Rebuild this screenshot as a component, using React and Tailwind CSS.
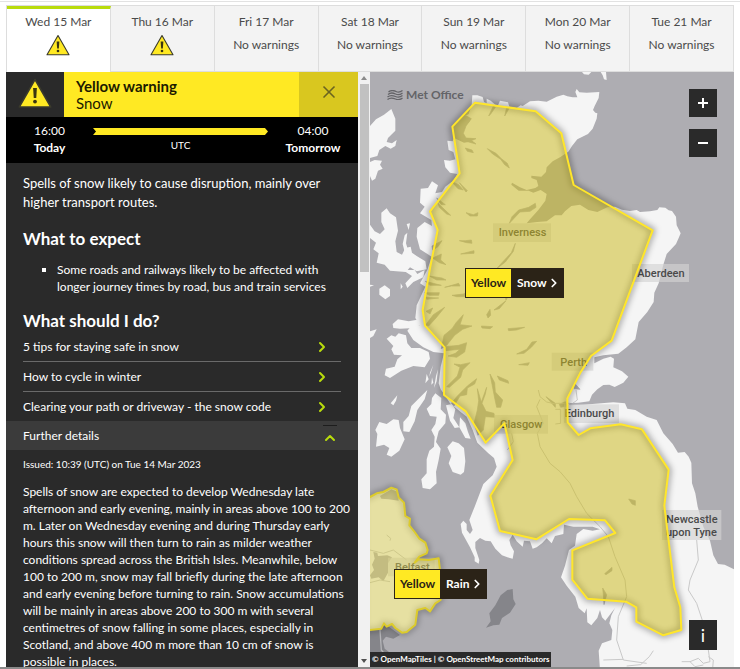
import { useState } from "react";
import { ChevronRight, ChevronUp, X } from "lucide-react";

const days = [
  { label: "Wed 15 Mar", warning: true },
  { label: "Thu 16 Mar", warning: true },
  { label: "Fri 17 Mar", warning: false },
  { label: "Sat 18 Mar", warning: false },
  { label: "Sun 19 Mar", warning: false },
  { label: "Mon 20 Mar", warning: false },
  { label: "Tue 21 Mar", warning: false },
];

const tips = [
  "5 tips for staying safe in snow",
  "How to cycle in winter",
  "Clearing your path or driveway - the snow code",
];

const placeLabels = [
  { lines: ["Inverness"], x: 369, y: 460, w: 174, h: 56, tx: 386 },
  { lines: ["Aberdeen"], x: 786, y: 582, w: 171, h: 54, tx: 802 },
  { lines: ["Perth"], x: 545, y: 848, w: 125, h: 54, tx: 571 },
  { lines: ["Edinburgh"], x: 582, y: 1003, w: 165, h: 56, tx: 584 },
  { lines: ["Glasgow"], x: 372, y: 1035, w: 162, h: 56, tx: 390 },
  { lines: ["Newcastle", "upon Tyne"], x: 876, y: 1320, w: 178, h: 90, tx: 888 },
  { lines: ["Belfast"], x: 54, y: 1463, w: 140, h: 56, tx: 75 },
];

const mainland =
  "M305 105 L307 76 L322 76 L338 81 L342 96 L350 100 L350 86 L362 92 L376 104 L384 106 L390 92 L414 97 L418 110 L440 114 L452 106 L458 108 L480 94 L505 92 L530 95 L560 80 L580 74 L592 79 L608 82 L622 82 L616 66 L620 57 L628 67 L650 68 L688 66 L686 84 L674 108 L669 120 L676 128 L682 130 L680 146 L668 176 L654 192 L622 208 L606 228 L595 245 L570 262 L548 274 L530 292 L528 306 L514 320 L484 317 L484 324 L500 330 L505 348 L496 354 L470 360 L450 352 L426 338 L424 344 L446 362 L476 362 L490 368 L512 360 L530 372 L526 392 L505 420 L480 448 L470 460 L502 456 L530 454 L555 436 L575 436 L585 424 L604 408 L630 404 L655 420 L682 426 L712 412 L735 410 L756 419 L780 423 L800 420 L810 426 L840 424 L862 420 L868 412 L886 413 L896 421 L906 423 L918 440 L920 466 L932 490 L926 504 L918 522 L890 552 L880 584 L866 640 L853 668 L851 696 L832 726 L806 756 L796 808 L770 832 L745 851 L700 856 L673 862 L673 880 L700 866 L722 860 L732 866 L730 892 L756 904 L775 920 L760 938 L734 951 L718 944 L700 945 L682 958 L666 974 L658 994 L625 998 L592 1000 L600 1006 L640 1004 L730 997 L765 1000 L772 1016 L796 1020 L830 1040 L860 1050 L880 1090 L908 1122 L924 1148 L944 1146 L956 1160 L964 1178 L966 1240 L976 1270 L983 1310 L1000 1370 L1020 1412 L1030 1456 L1044 1482 L1064 1484 L1092 1498 L1092 1800 L690 1800 L686 1742 L696 1720 L724 1710 L727 1680 L718 1660 L724 1636 L735 1614 L706 1652 L696 1642 L690 1620 L682 1644 L664 1666 L652 1657 L650 1615 L644 1630 L626 1614 L616 1580 L590 1547 L573 1522 L585 1487 L597 1440 L615 1427 L620 1392 L640 1377 L668 1382 L690 1378 L668 1370 L610 1370 L582 1364 L580 1392 L555 1398 L545 1420 L530 1405 L516 1420 L500 1432 L488 1436 L480 1414 L462 1412 L458 1430 L440 1414 L428 1394 L418 1410 L422 1426 L432 1444 L428 1466 L412 1462 L396 1456 L376 1436 L362 1414 L346 1412 L330 1404 L316 1416 L316 1434 L328 1470 L326 1481 L314 1474 L314 1462 L300 1432 L276 1388 L272 1362 L280 1352 L290 1362 L290 1380 L300 1392 L308 1380 L298 1350 L314 1310 L340 1242 L368 1216 L380 1190 L372 1164 L355 1150 L322 1118 L308 1080 L290 1040 L262 1018 L240 1000 L224 975 L212 958 L206 940 L212 890 L222 850 L190 846 L160 832 L130 810 L112 782 L124 768 L150 766 L136 744 L140 706 L166 650 L150 640 L172 600 L185 560 L150 538 L140 500 L142 474 L164 456 L186 468 L184 450 L150 430 L164 410 L150 398 L152 356 L174 354 L186 334 L204 346 L196 370 L216 366 L226 350 L252 330 L262 312 L240 308 L226 292 L222 270 L240 272 L256 268 L250 246 L236 240 L232 212 L248 214 L252 204 L282 218 L300 215 L316 220 L302 209 L316 206 L286 204 L276 186 L284 168 L298 156 L302 146 L286 138 L296 132 Z";

// Smaller land masses: Outer Hebrides, Skye, Mull, Islay, Jura, Kintyre, Arran
const islands = [
  "M0 168 L18 148 L42 134 L64 117 L76 146 L76 182 L54 204 L50 216 L66 220 L80 210 L76 228 L62 236 L46 228 L28 240 L22 258 L0 264 Z",
  "M0 276 L14 270 L36 272 L30 284 L38 296 L24 302 L16 326 L6 332 L0 318 Z",
  "M34 428 L50 415 L60 430 L78 442 L84 482 L76 514 L80 546 L96 554 L106 534 L122 530 L126 548 L140 558 L166 574 L170 598 L140 604 L120 592 L108 606 L60 602 L44 584 L20 578 L26 550 L10 538 L18 518 L0 504 L0 464 L14 484 L30 492 L44 478 L34 456 Z",
  "M104 496 L112 488 L108 520 L114 540 L104 546 L98 522 Z",
  "M110 462 L120 460 L116 480 Z",
  "M98 600 L134 600 L142 612 L164 600 L160 622 L130 636 L112 654 L106 640 L126 618 Z",
  "M28 656 L44 646 L60 658 L60 678 L46 688 L28 674 Z",
  "M92 640 L98 650 L92 658 Z",
  "M68 762 L84 748 L116 754 L150 748 L156 762 L134 774 L90 776 L70 774 Z",
  "M50 806 L64 796 L76 800 L86 790 L108 796 L112 820 L124 834 L150 834 L176 846 L180 866 L164 892 L130 888 L94 902 L60 924 L44 916 L48 896 L74 890 L82 868 L96 856 L72 854 L64 838 L70 828 Z",
  "M0 784 L20 778 L10 798 L0 804 Z",
  "M0 644 L12 646 L0 650 Z",
  "M62 1000 L82 976 L78 992 L70 1006 Z",
  "M172 960 L164 988 L142 1020 L134 1054 L118 1086 L100 1084 L100 1056 L116 1038 L124 1008 L148 984 Z",
  "M28 1056 L50 1062 L70 1048 L86 1050 L90 1074 L104 1108 L88 1142 L64 1160 L50 1154 L58 1134 L42 1124 L18 1130 L22 1092 L16 1080 Z",
  "M196 970 L214 984 L212 1018 L228 1034 L226 1060 L206 1084 L198 1116 L212 1136 L206 1170 L198 1206 L200 1240 L180 1258 L158 1254 L154 1228 L170 1210 L170 1168 L178 1142 L192 1130 L194 1100 L184 1080 L196 1062 L200 1040 L180 1038 L170 1016 L184 1002 L186 984 Z",
  "M246 1002 L256 1018 L250 1044 L268 1072 L254 1074 L240 1052 L228 1006 Z",
  "M270 1042 L286 1060 L294 1086 L302 1106 L286 1104 L268 1072 Z",
  "M232 1132 L248 1114 L266 1120 L282 1134 L286 1174 L282 1206 L272 1214 L248 1206 L236 1180 L244 1158 Z",
  "M190 884 L184 904 L178 920 L180 908 Z M170 912 L176 928 L166 940 Z M186 922 L190 938 L184 944 Z M204 898 L200 934 L192 954 L198 918 Z",
  "M636 6 L664 6 L656 14 L642 13 Z M692 6 L708 6 L710 30 L702 28 L698 16 Z",
];

const lochs = [
  "M352 236 L378 250 L394 266 L412 280 L418 294 L404 284 L392 268 L368 252 Z",
  "M286 234 L306 240 L310 248 L292 244 Z",
  "M370 108 L356 138 L362 132 L376 112 Z",
  "M410 112 L404 138 L418 114 Z",
  "M252 202 L250 170 L268 150 L290 138 L304 146 L288 168 L280 190 L288 204 L318 206 L304 212 L318 222 L296 216 Z",
  "M476 412 L496 400 L498 412 L480 424 L450 426 L418 460 L426 440 L446 420 Z",
  "M436 520 L424 548 L396 578 L380 596 L406 576 L430 544 Z",
  "M288 428 L310 434 L324 428 L322 438 L300 438 Z",
  "M244 334 L266 344 L280 360 L264 356 Z M268 338 L292 362 L288 366 Z",
  "M200 384 L226 404 L214 404 Z M204 400 L242 436 L230 432 L208 412 Z",
  "M268 512 L286 512 L304 510 L306 520 L290 518 Z M272 552 L312 542 L312 550 Z",
  "M186 528 L216 512 L204 530 L188 540 Z M188 564 L214 552 L212 570 L228 584 L208 578 Z",
  "M178 618 L216 624 L228 630 L200 630 Z M224 652 L266 640 L270 648 L244 648 Z",
  "M166 634 L214 646 L180 646 Z M164 668 L208 668 L206 676 L178 676 Z M168 682 L206 684 L170 688 Z",
  "M246 676 L280 672 L296 664 L290 680 L260 680 Z",
  "M166 766 L190 734 L224 712 L198 744 L176 768 Z M168 724 L188 714 L180 732 Z",
  "M360 718 L362 736 L354 744 L350 734 Z M452 622 L428 640 L406 680 L408 690 L424 664 Z",
  "M408 692 L390 706 L372 720 L388 716 Z",
  "M214 836 L222 796 L246 776 L258 758 L280 734 L270 764 L306 768 L278 778 L254 796 L230 826 Z",
  "M334 768 L368 770 L360 776 L336 774 Z M414 776 L464 772 L440 780 L416 782 Z",
  "M224 830 L266 826 L290 818 L284 846 L260 862 L234 858 L256 850 L270 838 L228 842 Z",
  "M440 852 L470 838 L486 816 L500 814 L484 832 L462 850 Z M446 884 L478 878 L474 886 Z",
  "M230 950 L262 918 L270 892 L252 882 L272 884 L300 878 L278 900 L272 922 L238 952 Z",
  "M382 918 L414 932 L416 940 L388 930 Z M360 912 L374 938 L376 966 L398 990 L392 1012 L380 1012 L374 984 Z",
  "M244 1000 L262 978 L292 948 L320 926 L314 942 L292 954 L290 974 L270 978 L252 1008 Z",
  "M322 956 L334 996 L350 952 L346 972 L336 1000 L348 1024 L372 1030 L374 1042 L346 1040 L340 1080 L324 1096 L312 1060 L322 1020 L326 992 Z",
  "M528 980 L556 1000 L556 1012 Z M614 940 L630 958 L612 956 Z M586 995 L568 1003 L572 1012 L592 1008 Z",
  "M776 1287 L796 1292 L796 1306 L786 1302 Z M704 1511 L726 1492 L726 1502 L708 1514 Z M698 1554 L710 1574 L702 1604 L700 1574 Z",
];

const roads = [
  "M505 960 L510 980 L530 996 L556 1002 M510 988 L500 1010 L520 1060 L502 1090 L510 1130 L540 1180 L570 1205 L600 1240 L620 1280 L650 1330 L690 1370 L715 1400 L735 1460 L765 1530 L770 1580 L745 1640 L740 1710 L760 1770 L830 1780 M425 1090 L430 1115 L412 1140",
  "M556 1000 L600 1000 M556 1018 L572 1018 L572 1060 L556 1062 M618 960 L622 990 L608 1000 M700 1770 L760 1768 M770 1788 L812 1784 L838 1760 L850 1742",
  "M980 1410 L985 1470 L960 1530 L955 1560 L980 1600 L1000 1660 L1015 1740 L1020 1775 L1000 1780 L985 1765 L960 1775 L935 1775 M1015 1760 L1030 1770 L1028 1795 M960 1775 L975 1790 L1000 1785",
];

const snowArea =
  "315,98 497,124 574,190 611,345 848,481 725,812 663,858 630,910 592,985 593,1057 626,1095 661,1075 752,1063 816,1078 896,1199 883,1307 913,1552 931,1612 934,1680 880,1696 799,1655 799,1612 768,1595 652,1586 607,1529 607,1441 736,1389 705,1351 597,1347 499,1408 390,1383 361,1277 413,1194 428,1170 403,1060 347,1118 288,1025 222,975 224,832 165,767 158,720 180,595 203,480 180,424 269,310 247,170";

const rainArea =
  "-20,1288 0,1281 20,1270 40,1266 64,1253 80,1258 86,1282 102,1298 106,1338 120,1346 118,1366 134,1386 148,1406 166,1418 173,1440 170,1450 148,1460 134,1478 146,1468 176,1470 206,1465 210,1500 212,1590 196,1600 180,1624 166,1614 142,1620 136,1664 110,1686 96,1688 76,1674 66,1662 50,1670 42,1660 34,1676 0,1680 -20,1680";

const WarningTriangle = ({ className }) => (
  <svg viewBox="0 0 32 28" className={className} aria-hidden="true">
    <path
      d="M16 2 L30 26.5 H2 Z"
      fill="#ffe923"
      stroke="#3a3a2c"
      strokeWidth="1.4"
      strokeLinejoin="round"
    />
    <path d="M14.3 9.5 h3.4 l-.6 9 h-2.2 z" fill="#3a3510" />
    <circle cx="16" cy="21.6" r="1.7" fill="#3a3510" />
  </svg>
);

const DayTabs = ({ selected, onSelect }) => (
  <div role="tablist" className="grid grid-cols-7 border-l border-t border-[#dddddd]">
    {days.map((day, index) => (
      <button
        key={day.label}
        type="button"
        role="tab"
        aria-selected={selected === index}
        onClick={() => onSelect(index)}
        className={
          selected === index
            ? "flex h-[66px] flex-col items-center border-r border-[#dddddd] border-t-[3px] border-t-[#b9dc0c] bg-white pt-1"
            : "flex h-[66px] flex-col items-center border-r border-b border-[#dddddd] bg-[#f3f3f3] pt-[7px]"
        }
      >
        <span className="text-xs leading-[18px]">{day.label}</span>
        {day.warning ? (
          <WarningTriangle className="mt-[3px] h-[22px] w-[26px]" />
        ) : (
          <span className="mt-[5px] text-xs leading-[18px]">No warnings</span>
        )}
      </button>
    ))}
  </div>
);

const WarningPanel = () => (
  <section className="flex min-h-0 min-w-0">
    <div className="min-w-0 flex-1 overflow-hidden bg-[#2a2a2a] text-white">
      {/* Title bar */}
      <header className="flex h-[45px] bg-[#ffe923] text-[#1c1a00]">
        <div className="flex w-[58px] items-center justify-center bg-[#2a2a2a] pb-1">
          <WarningTriangle className="h-8 w-9" />
        </div>
        <div className="flex-1 pt-[5px] pl-3">
          <h1 className="text-[15px] leading-[18px] font-bold">Yellow warning</h1>
          <p className="text-[15px] leading-[16px]">Snow</p>
        </div>
        <button
          type="button"
          aria-label="Close"
          className="flex w-[59px] items-center justify-center bg-[#d9c71f] pb-1.5 text-[#6b6420]"
        >
          <X className="size-5" strokeWidth={2} />
        </button>
      </header>

      {/* Start and end times */}
      <div className="flex h-[46px] bg-black pt-[5px] text-center text-xs leading-[17px]">
        <div className="w-[87px]">
          <p>16:00</p>
          <p className="font-bold">Today</p>
        </div>
        <div className="flex-1 pt-1.5">
          <svg viewBox="0 0 174 7" preserveAspectRatio="none" className="h-[7px] w-full">
            <path d="M0 0 H171 L174 3.5 L171 7 H0 L3 3.5 Z" fill="#ffe923" />
          </svg>
          <p className="text-[10px] leading-[20px]">UTC</p>
        </div>
        <div className="w-[90px]">
          <p>04:00</p>
          <p className="font-bold">Tomorrow</p>
        </div>
      </div>

      <div className="px-[17px] pt-[11px] text-xs">
        <p className="text-[13px] leading-[19px]">
          Spells of snow likely to cause disruption, mainly over higher transport routes.
        </p>
        <h2 className="mt-4 text-[17px] leading-[22px] font-bold">What to expect</h2>
        <ul className="mt-[11px] list-[square] pl-[34px] leading-[17px]">
          <li>
            Some roads and railways likely to be affected with longer journey times by road, bus
            and train services
          </li>
        </ul>
        <h2 className="mt-[15px] text-[17px] leading-[22px] font-bold">What should I do?</h2>
        <ul>
          {tips.map((tip) => (
            <li key={tip} className="border-b border-[#6a6a6a] last:border-b-0">
              <a href="#" className="flex h-[29px] items-center justify-between pr-[11px]">
                {tip}
                <ChevronRight className="size-4 text-[#b9dc0c]" strokeWidth={3} />
              </a>
            </li>
          ))}
        </ul>
      </div>

      <button
        type="button"
        aria-expanded="true"
        className="flex h-[29px] w-full items-center justify-between bg-[#3b3b3b] pr-5 pl-[17px] text-xs"
      >
        Further details
        <span className="flex flex-col items-center">
          <span className="h-px w-3.5 bg-[#1d1d1d]"></span>
          <ChevronUp className="mt-1 size-4 text-[#b9dc0c]" strokeWidth={3} />
        </span>
      </button>

      <div className="pt-1.5 pl-[17px]">
        <p className="text-[10px] leading-[17px]">Issued: 10:39 (UTC) on Tue 14 Mar 2023</p>
        <p className="mt-2.5 text-xs leading-[17px]">
          Spells of snow are expected to develop Wednesday late
          <br />
          afternoon and early evening, mainly in areas above 100 to 200
          <br />
          m. Later on Wednesday evening and during Thursday early
          <br />
          hours this snow will then turn to rain as milder weather
          <br />
          conditions spread across the British Isles. Meanwhile, below
          <br />
          100 to 200 m, snow may fall briefly during the late afternoon
          <br />
          and early evening before turning to rain. Snow accumulations
          <br />
          will be mainly in areas above 200 to 300 m with several
          <br />
          centimetres of snow falling in some places, especially in
          <br />
          Scotland, and above 400 m more than 10 cm of snow is
          <br />
          possible in places.
        </p>
      </div>
    </div>

    {/* Scrollbar */}
    <div className="flex w-3 flex-col items-center bg-[#f1f1f1] py-1">
      <svg viewBox="0 0 6 4" className="mb-1 h-1 w-1.5">
        <path d="M0 4 L3 0 L6 4 Z" fill="#8a8a8a" />
      </svg>
      <div className="h-[188px] w-[9px] bg-[#c1c1c1]"></div>
      <svg viewBox="0 0 6 4" className="mt-auto h-1 w-1.5">
        <path d="M0 0 L3 4 L6 0 Z" fill="#505050" />
      </svg>
    </div>
  </section>
);

const MapBadge = ({ type, className }) => (
  <button
    type="button"
    className={`absolute flex h-[30px] border border-[#2b2317] text-xs leading-7 font-bold ${className}`}
  >
    <span className="w-[45px] bg-[#ffe923] text-center text-[#2b2317]">Yellow</span>
    <span className="flex items-center bg-[#2b2317] pr-0.5 pl-1.5 text-white">
      {type}
      <ChevronRight className="size-3.5" strokeWidth={3} />
    </span>
  </button>
);

const WarningMap = () => (
  <section className="relative min-h-0 overflow-hidden bg-[#aeadb2]">
    <svg
      viewBox="0 6 1092 1785"
      preserveAspectRatio="xMidYMid slice"
      className="absolute inset-0 h-full w-full"
      role="img"
      aria-label="Map of warning areas"
    >
      <defs>
        <filter id="soft" x="-10%" y="-10%" width="120%" height="120%">
          <feGaussianBlur stdDeviation="9" />
        </filter>
      </defs>
      <g fill="#f5f5f5">
        <path d={mainland} />
        {islands.map((d) => (
          <path key={d} d={d} />
        ))}
      </g>
      <g fill="#aeadb2" stroke="#aeadb2" strokeWidth="2" strokeLinejoin="round">
        {lochs.map((d) => (
          <path key={d} d={d} />
        ))}
      </g>
      <g fill="none" stroke="#c9c9c9" strokeWidth="3" strokeLinejoin="round">
        {roads.map((d) => (
          <path key={d} d={d} />
        ))}
      </g>

      {/* Ireland and the Isle of Man */}
      <path
        d="M0 1670 L50 1665 L90 1695 L70 1706 L48 1700 L38 1712 L44 1736 L62 1750 L0 1760 Z"
        fill="#85858a"
      />
      <path d="M30 1680 L34 1740 L44 1752" fill="none" stroke="#b5b5b8" strokeWidth="4" />
      <path
        d="M428 1557 L430 1588 L437 1602 L420 1628 L396 1644 L388 1664 L370 1666 L348 1673 L362 1654 L358 1630 L376 1606 L392 1576 L412 1560 Z"
        fill="#85858a"
      />
      <polygon points={rainArea} fill="#f5f5f5" />
      <path
        d="M10 1446 L22 1448 L24 1458 L52 1456 L66 1462 L54 1480 L54 1508 L40 1534 L26 1522 L4 1526 L0 1516 L12 1500 L6 1484 L14 1466 Z M30 1278 L64 1258 L84 1266 L86 1292 L56 1288 L34 1286 Z"
        fill="#aeadb2"
      />
      <path
        d="M0 1440 L40 1450 L70 1440 L110 1470 M0 1538 L30 1530 L60 1535 M50 1395 L62 1405 L60 1412"
        fill="none"
        stroke="#c4c4c4"
        strokeWidth="3"
      />

      {placeLabels.map((place) => (
        <g key={place.lines[0]}>
          <rect
            x={place.x}
            y={place.y}
            width={place.w}
            height={place.h}
            fill="#d2d2d2"
            fillOpacity="0.65"
          />
          {place.lines.map((line, index) => (
            <text
              key={line}
              x={place.tx}
              y={place.y + 39 + index * 40}
              fontSize="33"
              fontWeight="500"
              fill="#4a4a4a"
              className="font-['Roboto',sans-serif]"
            >
              {line}
            </text>
          ))}
        </g>
      ))}

      <polygon
        points={rainArea}
        fill="none"
        stroke="#000000"
        strokeOpacity="0.35"
        strokeWidth="12"
        filter="url(#soft)"
      />
      <polygon
        points={rainArea}
        fill="#d8cb50"
        fillOpacity="0.5"
        stroke="#dccb2b"
        strokeWidth="6"
        strokeLinejoin="round"
      />
      <polygon
        points={snowArea}
        fill="none"
        stroke="#000000"
        strokeOpacity="0.4"
        strokeWidth="14"
        filter="url(#soft)"
      />
      <polygon
        points={snowArea}
        fill="#cbba1c"
        fillOpacity="0.52"
        stroke="#ffe62a"
        strokeWidth="6"
        strokeLinejoin="round"
      />
    </svg>

    {/* Logo */}
    <div className="absolute top-3.5 left-[17px] flex items-center gap-[3px] text-[#646468]">
      <svg
        viewBox="0 0 32 20"
        className="h-2.5 w-4"
        fill="none"
        stroke="currentColor"
        strokeWidth="2.6"
      >
        <path d="M3 4 C9 -1 14 1 18 3 S26 5 31 1" />
        <path d="M2 9 C8 4 13 6 17 8 S26 10 31 6" />
        <path d="M1 14 C7 9 12 11 17 13 S26 15 31 11" />
        <path d="M1 19 C7 14 12 16 17 18 S26 20 31 16" />
      </svg>
      <span className="text-xs leading-[18px] font-bold">Met Office</span>
    </div>

    {/* Zoom controls */}
    <div className="absolute top-[17px] right-[17px] flex flex-col gap-3 text-white">
      <button
        type="button"
        aria-label="Zoom in"
        className="flex size-7 items-center justify-center bg-[#2a2a2a]"
      >
        <svg viewBox="0 0 10 10" className="size-2.5" stroke="currentColor" strokeWidth="2">
          <path d="M5 0 V10 M0 5 H10" />
        </svg>
      </button>
      <button
        type="button"
        aria-label="Zoom out"
        className="flex size-7 items-center justify-center bg-[#2a2a2a]"
      >
        <svg viewBox="0 0 10 10" className="size-2.5" stroke="currentColor" strokeWidth="2">
          <path d="M0 5 H10" />
        </svg>
      </button>
    </div>

    <MapBadge type="Snow" className="top-[196px] left-[95px]" />
    <MapBadge type="Rain" className="top-[497px] left-6" />

    <button
      type="button"
      className="absolute right-[17px] bottom-[17px] h-[30px] w-7 bg-[#2a2a2a] text-lg leading-7 text-white"
    >
      i
    </button>
    <p className="absolute bottom-0 left-0 bg-[#2a2a2a] px-0.5 text-[8px] leading-[15px] font-bold text-white">
      © OpenMapTiles | © OpenStreetMap contributors
    </p>
  </section>
);

export default function App() {
  const [selected, setSelected] = useState(0);

  return (
    <div className="flex h-screen flex-col border-b-2 border-[#8a8a8a] bg-white font-['Lato',sans-serif] text-[#4a4a4a]">
      <div className="mt-px mb-[3px] h-px shrink-0 bg-[#e2e2e2]"></div>
      <main className="flex min-h-0 flex-1 flex-col px-1.5">
        <DayTabs selected={selected} onSelect={setSelected} />
        <div className="grid min-h-0 flex-1 grid-cols-2 grid-rows-1">
          <WarningPanel />
          <WarningMap />
        </div>
      </main>
    </div>
  );
}
